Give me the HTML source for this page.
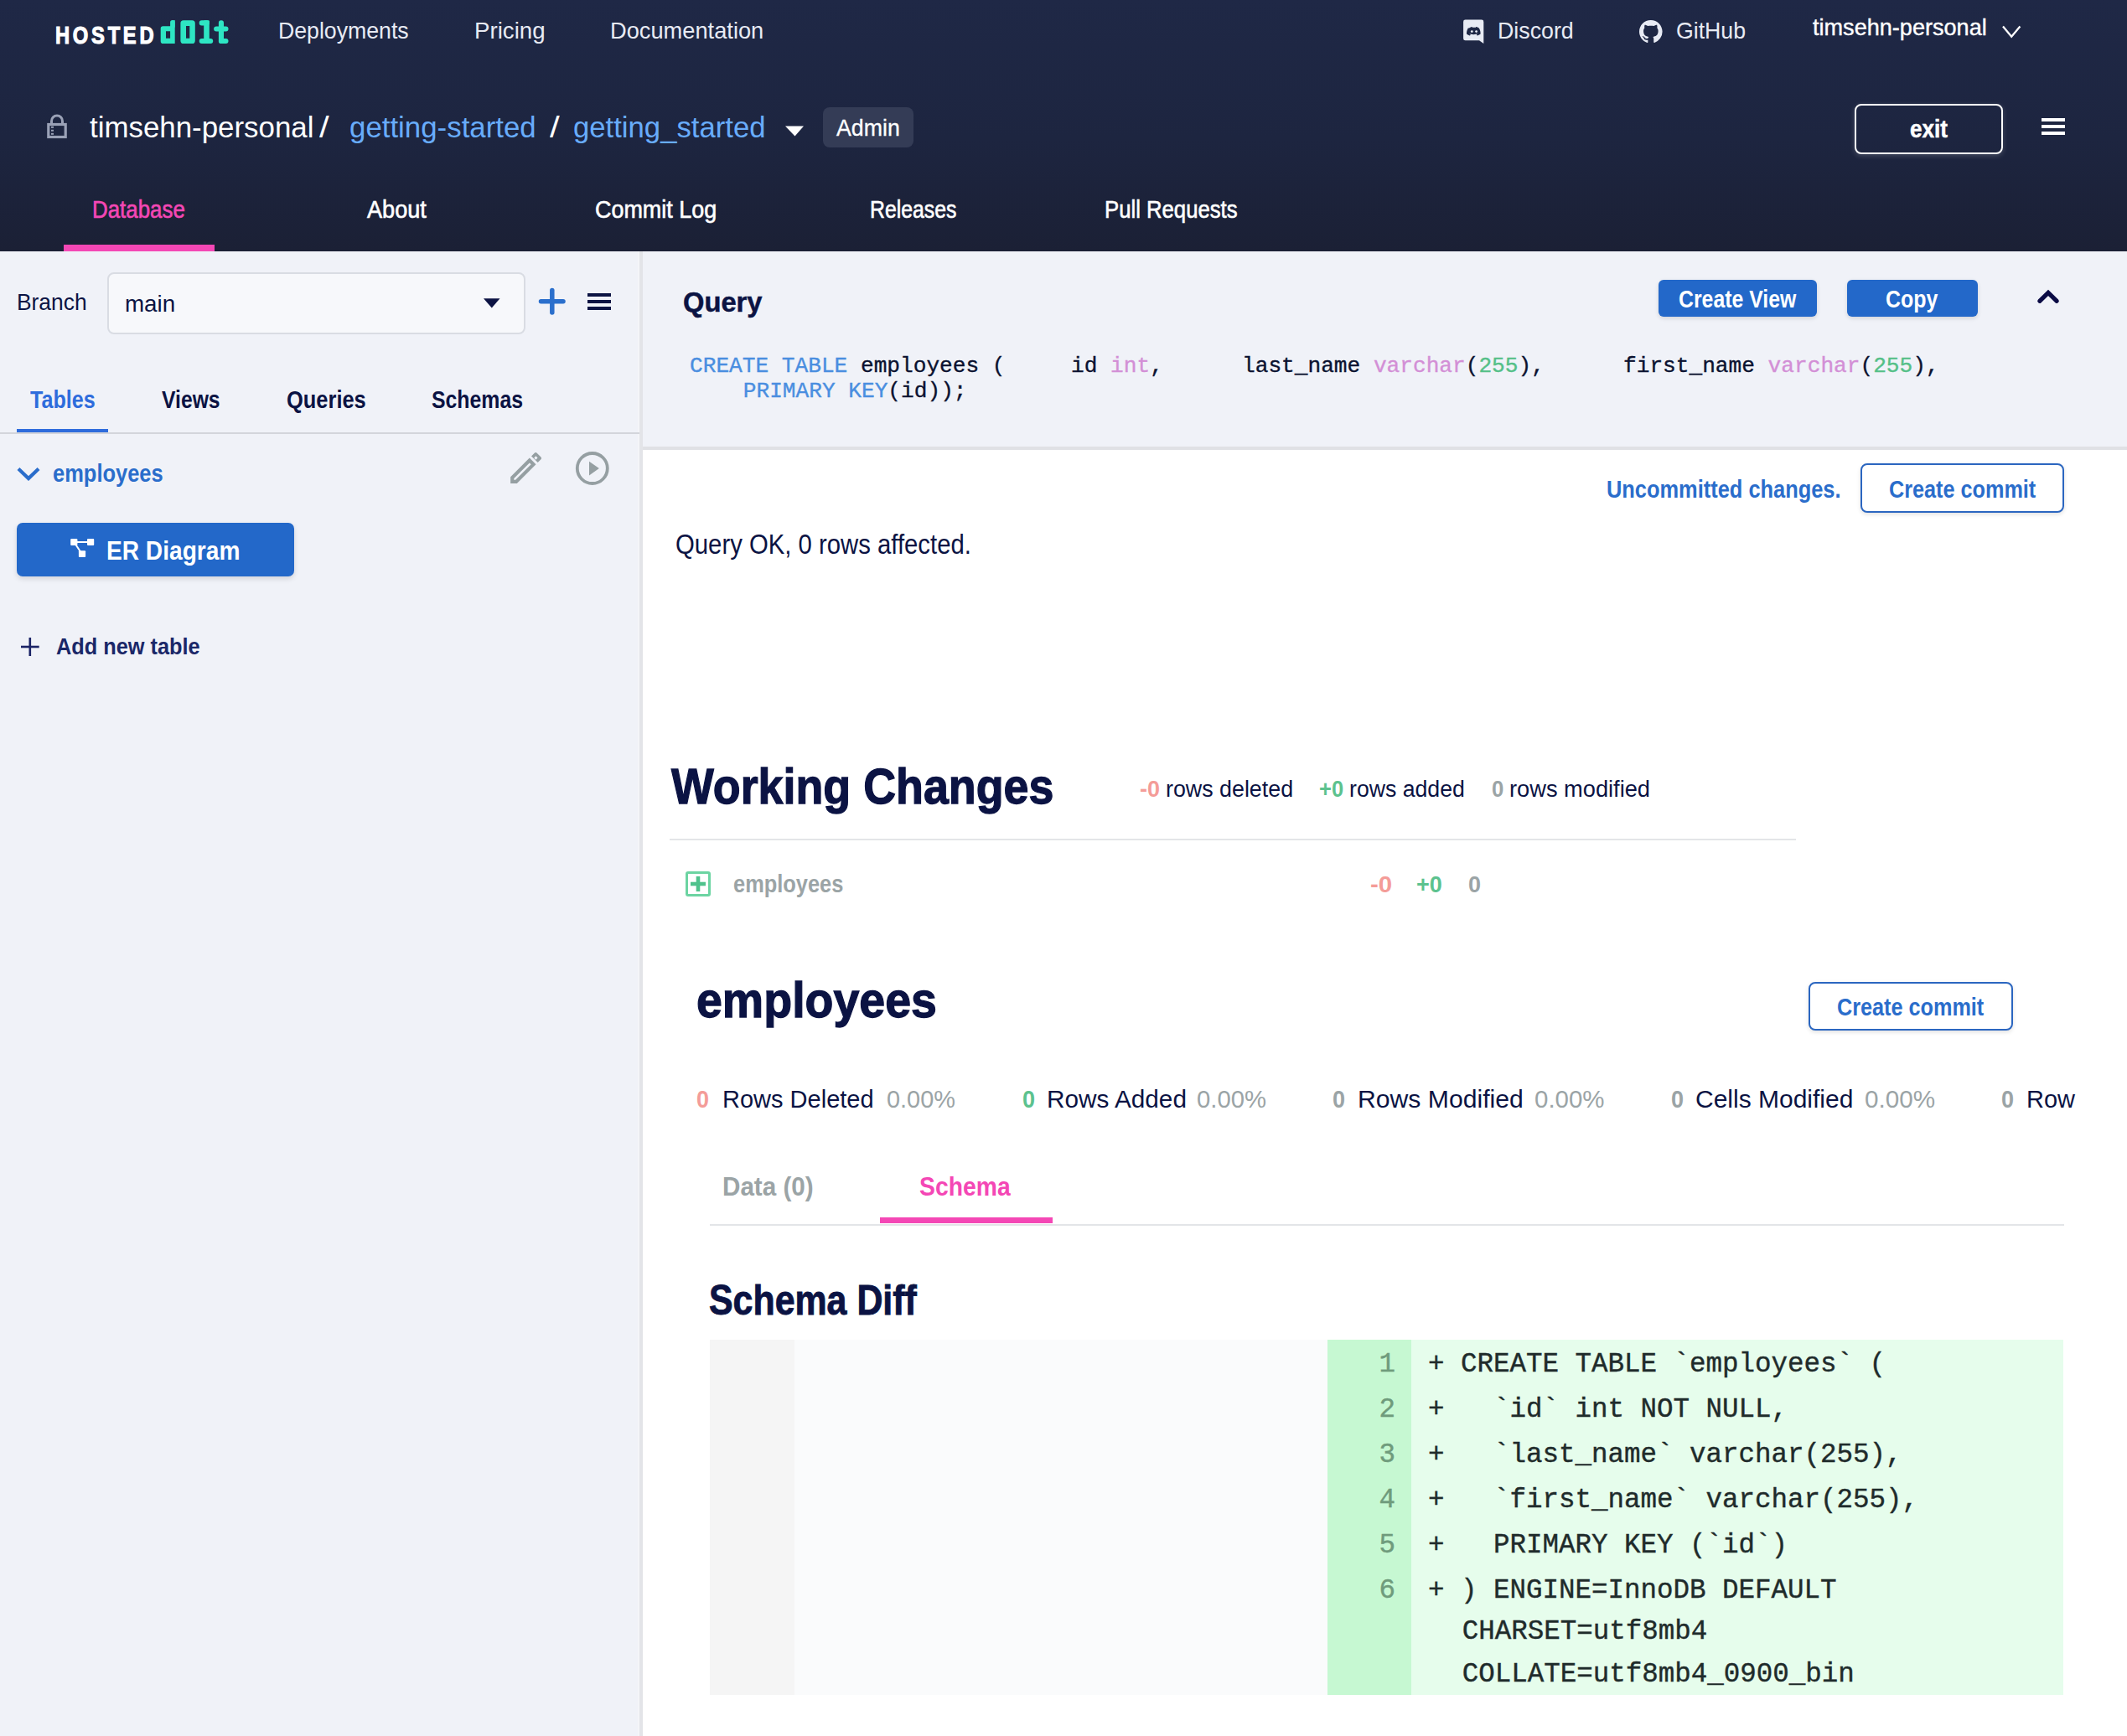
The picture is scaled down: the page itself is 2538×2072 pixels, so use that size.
<!DOCTYPE html>
<html><head><meta charset="utf-8">
<style>
html,body{margin:0;padding:0;}
body{width:2538px;height:2072px;position:relative;overflow:hidden;background:#ffffff;font-family:"Liberation Sans",sans-serif;}
.t{position:absolute;white-space:pre;line-height:1;transform-origin:0 0;}
.a{position:absolute;box-sizing:border-box;}
svg{position:absolute;overflow:visible;}
.m{position:absolute;white-space:pre;font-family:"Liberation Mono",monospace;line-height:1;}
</style></head><body>
<!-- header -->
<div class="a" style="left:0;top:0;width:2538px;height:300px;background:linear-gradient(180deg,#1f2846 0%,#1d2540 55%,#1b2035 100%);"></div>
<div class="a" style="left:76px;top:292px;width:180px;height:8px;background:#f447b5;"></div>
<!-- logo d0lt -->
<svg style="left:0;top:0" width="300" height="70" viewBox="0 0 300 70">
 <g fill="#2ee5c3">
  <path fill-rule="evenodd" d="M194.5 31.2h11.4v-4.4a2.8 2.8 0 0 1 2.8-2.8v0V52h-14.2a2.8 2.8 0 0 1-2.8-2.8V34a2.8 2.8 0 0 1 2.8-2.8zM198 37.2v8.5h5.1v-8.5z"/>
  <rect x="203.1" y="24" width="5.6" height="10" rx="2.8"/>
  <path fill-rule="evenodd" d="M219 24.3h10.2a3.6 3.6 0 0 1 3.6 3.6v20.5a3.6 3.6 0 0 1-3.6 3.6H219a3.6 3.6 0 0 1-3.6-3.6V27.9a3.6 3.6 0 0 1 3.6-3.6zM222 31v14.7h4.3V31z"/>
  <rect x="237.7" y="24.3" width="12.1" height="6.2" rx="3"/>
  <rect x="243.2" y="24.3" width="6.6" height="27.7" rx="1"/>
  <rect x="237.7" y="45.9" width="16.5" height="6.1" rx="3"/>
  <rect x="260.9" y="24.3" width="6.1" height="27.7" rx="3"/>
  <rect x="255.1" y="31.4" width="17.4" height="6.2" rx="3"/>
  <rect x="260.9" y="45.9" width="11.6" height="6.1" rx="3"/>
 </g>
</svg>
<!-- discord icon -->
<svg style="left:1746px;top:23px" width="26" height="30" viewBox="0 0 26 30">
 <path d="M2.5 0.6h19.4a2.4 2.4 0 0 1 2.4 2.4V29L19 25.3H2.5A2.4 2.4 0 0 1 0.1 22.9V3A2.4 2.4 0 0 1 2.5 0.6z" fill="#e8ebf4"/>
 <path d="M7 10.5c1.8-1.2 3.5-1.4 3.5-1.4l0.4 0.7c1.4-0.2 2.6-0.2 4 0l0.4-0.7s1.7 0.2 3.5 1.4c1.4 2.3 1.9 4.6 1.8 6.9-1.4 1.1-2.8 1.7-4 2l-0.8-1.3c0.7-0.3 1.3-0.6 1.8-1-3.2 1.5-7.5 1.5-10.6 0 0.5 0.4 1.1 0.7 1.8 1l-0.8 1.3c-1.2-0.3-2.6-0.9-4-2-0.1-2.3 0.4-4.6 1.8-6.9z" fill="#1e2745"/>
 <circle cx="10.3" cy="14.6" r="1.4" fill="#e8ebf4"/><circle cx="15.6" cy="14.6" r="1.4" fill="#e8ebf4"/>
</svg>
<!-- github icon -->
<svg style="left:1956.2px;top:23.8px" width="27.6" height="27.6" viewBox="0 0 16 16">
 <path fill="#e8ebf4" d="M8 0C3.58 0 0 3.58 0 8c0 3.54 2.29 6.53 5.47 7.59.4.07.55-.17.55-.38 0-.19-.01-.82-.01-1.49-2.01.37-2.53-.49-2.69-.94-.09-.23-.48-.94-.82-1.13-.28-.15-.68-.52-.01-.53.63-.01 1.08.58 1.23.82.72 1.21 1.87.87 2.33.66.07-.52.28-.87.51-1.07-1.78-.2-3.64-.89-3.64-3.95 0-.87.31-1.59.82-2.15-.08-.2-.36-1.02.08-2.12 0 0 .67-.21 2.2.82.64-.18 1.32-.27 2-.27.68 0 1.36.09 2 .27 1.53-1.04 2.2-.82 2.2-.82.44 1.1.16 1.92.08 2.12.51.56.82 1.27.82 2.15 0 3.07-1.87 3.75-3.65 3.95.29.25.54.73.54 1.48 0 1.07-.01 1.93-.01 2.2 0 .21.15.46.55.38A8.013 8.013 0 0016 8c0-4.42-3.58-8-8-8z"/>
</svg>
<!-- user chevron -->
<svg style="left:0;top:0" width="2538" height="300" viewBox="0 0 2538 300">
 <polyline points="2390,31.5 2400.2,43.8 2410.4,31.5" fill="none" stroke="#ffffff" stroke-width="2.3"/>
 <!-- lock -->
 <g fill="none" stroke="#9aa1b6">
  <path d="M61.5 147.5v-3a6.5 6.5 0 0 1 13 0v3" stroke-width="3"/>
  <rect x="57.8" y="148.5" width="20.4" height="15" stroke-width="3.2"/>
 </g>
 <g fill="#9aa1b6"><rect x="61" y="150.8" width="3" height="2"/><rect x="61" y="154.8" width="3" height="2"/><rect x="61" y="158.8" width="3" height="2"/></g>
 <!-- breadcrumb triangle -->
 <path d="M937 150.5h22l-10.5 12z" fill="#ffffff"/>
 <!-- hamburger -->
 <g fill="#ffffff"><rect x="2436" y="141" width="28" height="4"/><rect x="2436" y="149" width="28" height="4"/><rect x="2436" y="157" width="28" height="4"/></g>
</svg>
<div class="a" style="left:982px;top:128px;width:108px;height:48px;border-radius:8px;background:#343c56;"></div>
<div class="a" style="left:2213px;top:124px;width:177px;height:60px;border-radius:8px;border:2.5px solid #ffffff;box-shadow:0 2px 6px rgba(255,255,255,0.18);"></div>

<!-- sidebar -->
<div class="a" style="left:0;top:300px;width:765px;height:1772px;background:#f0f2f8;"></div>
<div class="a" style="left:760.7px;top:300px;width:2.5px;height:1772px;background:#f4f5f8;"></div><div class="a" style="left:763.2px;top:300px;width:3.6px;height:1772px;background:#e3e4e8;"></div>
<div class="a" style="left:128px;top:325px;width:499px;height:74px;border-radius:8px;border:2px solid #d9dce3;background:#f7f8fb;"></div>
<div class="a" style="left:0;top:516px;width:763px;height:2px;background:#d3d5db;"></div>
<div class="a" style="left:20px;top:511.8px;width:109px;height:4.2px;background:#2e6cdc;"></div>
<div class="a" style="left:20px;top:624px;width:331px;height:64px;border-radius:7px;background:#2368c9;box-shadow:0 3px 6px rgba(0,0,0,0.12);"></div>
<svg style="left:0;top:300px" width="765" height="600" viewBox="0 300 765 600">
 <path d="M577 356.2h19.5l-9.7 11.4z" fill="#0c1343"/>
 <g stroke="#2b6fcc" stroke-width="5.5" stroke-linecap="round"><line x1="658.8" y1="346.5" x2="658.8" y2="373"/><line x1="645.5" y1="359.8" x2="672" y2="359.8"/></g>
 <g fill="#0c1343"><rect x="701" y="350" width="28" height="4"/><rect x="701" y="358" width="28" height="4"/><rect x="701" y="366" width="28" height="4"/></g>
 <polyline points="23.5,561 34,571 44.5,561" fill="none" stroke="#2a6dcb" stroke-width="4.2" stroke-linecap="square"/>
 <!-- pencil -->
 <g transform="translate(603,533.9) scale(2.05)" fill="#959fa2" fill-rule="evenodd">
  <path d="M3 17.25L14.06 6.19l3.75 3.75L6.75 21H3zM5 19h.92l9.06-9.06-.92-.92L5 18.08z"/>
  <path d="M15.13 5.12l1.83-1.83c.39-.39 1.02-.39 1.41 0l2.34 2.34c.39.39.39 1.02 0 1.41l-1.83 1.83zM17.75 5.1l-1.05 1.05 1.05 1.05 1.05-1.05z"/>
 </g>
 <circle cx="706.8" cy="559" r="18" fill="none" stroke="#959fa2" stroke-width="3.8"/>
 <path d="M703 550.7v16.8l11.9-8.4z" fill="#959fa2"/>
 <!-- ER icon -->
 <g fill="#ffffff"><rect x="84.2" y="643" width="8.2" height="8" rx="1"/><rect x="104" y="643" width="8.2" height="8" rx="1"/><rect x="93.9" y="657.2" width="8.2" height="7.8" rx="1"/></g>
 <g stroke="#ffffff" stroke-width="2"><line x1="90" y1="647" x2="106" y2="647"/><line x1="89" y1="648" x2="97" y2="660"/></g>
 <!-- add plus -->
 <g stroke="#1b2366" stroke-width="2.6"><line x1="35.8" y1="761" x2="35.8" y2="783"/><line x1="25" y1="772" x2="46.7" y2="772"/></g>
</svg>

<!-- query panel -->
<div class="a" style="left:767px;top:300px;width:1771px;height:234px;background:#f0f2f8;"></div>
<div class="a" style="left:767px;top:533px;width:1771px;height:4px;background:#e0e1e5;"></div>
<div class="a" style="left:1979px;top:334px;width:189px;height:44px;border-radius:6px;background:#2368c9;box-shadow:0 2px 5px rgba(0,0,0,0.13);"></div>
<div class="a" style="left:2204px;top:334px;width:156px;height:44px;border-radius:6px;background:#2368c9;box-shadow:0 2px 5px rgba(0,0,0,0.13);"></div>
<svg style="left:2400px;top:320px" width="80" height="60" viewBox="2400 320 80 60">
 <polyline points="2433.8,359.3 2444,349.3 2454.2,359.3" fill="none" stroke="#0b0b45" stroke-width="5.2" stroke-linecap="round" stroke-linejoin="miter"/>
</svg>

<div class="a" style="left:2220px;top:553px;width:243px;height:59px;border-radius:8px;border:2.5px solid #2b66c0;background:#fff;box-shadow:0 2px 5px rgba(0,0,0,0.12);"></div>

<!-- working changes -->
<div class="a" style="left:799px;top:1000.7px;width:1344px;height:2px;background:#e3e5e8;"></div>
<div class="a" style="left:817.7px;top:1039.7px;width:30.6px;height:30.6px;border-radius:3px;border:3px solid #6cd4a2;"></div>
<svg style="left:817px;top:1039px" width="32" height="32" viewBox="0 0 32 32"><g stroke="#4fc28c" stroke-width="4.6"><line x1="16" y1="7" x2="16" y2="25"/><line x1="7" y1="16" x2="25" y2="16"/></g></svg>

<!-- employees -->
<div class="a" style="left:2158px;top:1171.6px;width:244px;height:58.2px;border-radius:8px;border:2.5px solid #2b66c0;background:#fff;box-shadow:0 2px 5px rgba(0,0,0,0.12);"></div>
<div class="a" style="left:846.5px;top:1461px;width:1616px;height:2px;background:#e3e5e8;"></div>
<div class="a" style="left:1050px;top:1453px;width:206px;height:7px;background:#f447b5;"></div>

<!-- diff -->
<div class="a" style="left:847px;top:1598.7px;width:100.6px;height:424px;background:#f5f5f5;"></div>
<div class="a" style="left:947.6px;top:1598.7px;width:636.5px;height:424px;background:#fafbfc;"></div>
<div class="a" style="left:1584.1px;top:1598.7px;width:100.1px;height:424px;background:#c6f8d2;"></div>
<div class="a" style="left:1684.2px;top:1598.7px;width:778.3px;height:424px;background:#e6fdec;"></div>
<!--DIFF-->
<span class='t' style='left:331.7px;top:23.2px;font-family:"Liberation Sans";font-weight:400;font-size:28px;color:#e8ebf4;letter-spacing:0px;-webkit-text-stroke-width:0px;transform:scaleX(0.9528)'>Deployments</span>
<span class='t' style='left:566.0px;top:23.2px;font-family:"Liberation Sans";font-weight:400;font-size:28px;color:#e8ebf4;letter-spacing:0px;-webkit-text-stroke-width:0px;transform:scaleX(0.9878)'>Pricing</span>
<span class='t' style='left:728.1px;top:23.2px;font-family:"Liberation Sans";font-weight:400;font-size:28px;color:#e8ebf4;letter-spacing:0px;-webkit-text-stroke-width:0px;transform:scaleX(0.9730)'>Documentation</span>
<span class='t' style='left:1787.1px;top:23.2px;font-family:"Liberation Sans";font-weight:400;font-size:28px;color:#e8ebf4;letter-spacing:0px;-webkit-text-stroke-width:0px;transform:scaleX(0.9560)'>Discord</span>
<span class='t' style='left:2000.0px;top:23.2px;font-family:"Liberation Sans";font-weight:400;font-size:28px;color:#e8ebf4;letter-spacing:0px;-webkit-text-stroke-width:0px;transform:scaleX(0.9529)'>GitHub</span>
<span class='t' style='left:2163.0px;top:18.5px;font-family:"Liberation Sans";font-weight:400;font-size:28px;color:#ffffff;letter-spacing:0px;-webkit-text-stroke-width:0.4px;transform:scaleX(0.9671)'>timsehn-personal</span>
<span class='t' style='left:107.0px;top:134.0px;font-family:"Liberation Sans";font-weight:400;font-size:35px;color:#ffffff;letter-spacing:0px;-webkit-text-stroke-width:0px;transform:scaleX(0.9962)'>timsehn-personal</span>
<span class='t' style='left:381.0px;top:134.0px;font-family:"Liberation Sans";font-weight:400;font-size:35px;color:#ffffff;letter-spacing:0px;-webkit-text-stroke-width:0px;transform:scaleX(1.2000)'>/</span>
<span class='t' style='left:417.0px;top:134.0px;font-family:"Liberation Sans";font-weight:400;font-size:35px;color:#68acfb;letter-spacing:0px;-webkit-text-stroke-width:0px;transform:scaleX(0.9955)'>getting-started</span>
<span class='t' style='left:656.0px;top:134.0px;font-family:"Liberation Sans";font-weight:400;font-size:35px;color:#ffffff;letter-spacing:0px;-webkit-text-stroke-width:0px;transform:scaleX(1.2000)'>/</span>
<span class='t' style='left:684.0px;top:134.0px;font-family:"Liberation Sans";font-weight:400;font-size:35px;color:#68acfb;letter-spacing:0px;-webkit-text-stroke-width:0px;transform:scaleX(0.9912)'>getting_started</span>
<span class='t' style='left:997.7px;top:138.9px;font-family:"Liberation Sans";font-weight:400;font-size:27.6px;color:#ffffff;letter-spacing:0px;-webkit-text-stroke-width:0.3px;transform:scaleX(0.9688)'>Admin</span>
<span class='t' style='left:2278.7px;top:139.0px;font-family:"Liberation Sans";font-weight:700;font-size:30px;color:#ffffff;letter-spacing:0px;-webkit-text-stroke-width:0.5px;transform:scaleX(0.8706)'>exit</span>
<span class='t' style='left:110.2px;top:236.0px;font-family:"Liberation Sans";font-weight:400;font-size:29px;color:#f447b5;letter-spacing:0px;-webkit-text-stroke-width:0.6px;transform:scaleX(0.8926)'>Database</span>
<span class='t' style='left:438.0px;top:236.0px;font-family:"Liberation Sans";font-weight:400;font-size:29px;color:#ffffff;letter-spacing:0px;-webkit-text-stroke-width:0.6px;transform:scaleX(0.9342)'>About</span>
<span class='t' style='left:710.1px;top:236.0px;font-family:"Liberation Sans";font-weight:400;font-size:29px;color:#ffffff;letter-spacing:0px;-webkit-text-stroke-width:0.6px;transform:scaleX(0.9286)'>Commit Log</span>
<span class='t' style='left:1037.9px;top:236.0px;font-family:"Liberation Sans";font-weight:400;font-size:29px;color:#ffffff;letter-spacing:0px;-webkit-text-stroke-width:0.6px;transform:scaleX(0.8551)'>Releases</span>
<span class='t' style='left:1318.2px;top:236.0px;font-family:"Liberation Sans";font-weight:400;font-size:29px;color:#ffffff;letter-spacing:0px;-webkit-text-stroke-width:0.6px;transform:scaleX(0.8864)'>Pull Requests</span>
<span class='t' style='left:19.9px;top:347.0px;font-family:"Liberation Sans";font-weight:400;font-size:27.5px;color:#0b1343;letter-spacing:0px;-webkit-text-stroke-width:0px;transform:scaleX(0.9590)'>Branch</span>
<span class='t' style='left:148.5px;top:348.8px;font-family:"Liberation Sans";font-weight:400;font-size:28px;color:#0b1343;letter-spacing:0px;-webkit-text-stroke-width:0px;transform:scaleX(0.9912)'>main</span>
<span class='t' style='left:36.0px;top:463.0px;font-family:"Liberation Sans";font-weight:700;font-size:29px;color:#2e6cdc;letter-spacing:0px;-webkit-text-stroke-width:0px;transform:scaleX(0.8652)'>Tables</span>
<span class='t' style='left:193.0px;top:463.0px;font-family:"Liberation Sans";font-weight:700;font-size:29px;color:#0b1343;letter-spacing:0px;-webkit-text-stroke-width:0px;transform:scaleX(0.8519)'>Views</span>
<span class='t' style='left:342.1px;top:463.0px;font-family:"Liberation Sans";font-weight:700;font-size:29px;color:#0b1343;letter-spacing:0px;-webkit-text-stroke-width:0px;transform:scaleX(0.8774)'>Queries</span>
<span class='t' style='left:515.1px;top:463.0px;font-family:"Liberation Sans";font-weight:700;font-size:29px;color:#0b1343;letter-spacing:0px;-webkit-text-stroke-width:0px;transform:scaleX(0.8560)'>Schemas</span>
<span class='t' style='left:63.1px;top:551.0px;font-family:"Liberation Sans";font-weight:700;font-size:29px;color:#2a6dcb;letter-spacing:0px;-webkit-text-stroke-width:0px;transform:scaleX(0.8784)'>employees</span>
<span class='t' style='left:127.2px;top:642.0px;font-family:"Liberation Sans";font-weight:700;font-size:31px;color:#ffffff;letter-spacing:0px;-webkit-text-stroke-width:0px;transform:scaleX(0.9070)'>ER Diagram</span>
<span class='t' style='left:67.1px;top:758.0px;font-family:"Liberation Sans";font-weight:700;font-size:28px;color:#1a2768;letter-spacing:0px;-webkit-text-stroke-width:0px;transform:scaleX(0.9043)'>Add new table</span>
<span class='t' style='left:814.5px;top:344.0px;font-family:"Liberation Sans";font-weight:700;font-size:33px;color:#0b1343;letter-spacing:0px;-webkit-text-stroke-width:0.5px;transform:scaleX(0.9904)'>Query</span>
<span class='t' style='left:2003.1px;top:343.0px;font-family:"Liberation Sans";font-weight:700;font-size:29px;color:#ffffff;letter-spacing:0px;-webkit-text-stroke-width:0px;transform:scaleX(0.8558)'>Create View</span>
<span class='t' style='left:2250.1px;top:343.0px;font-family:"Liberation Sans";font-weight:700;font-size:29px;color:#ffffff;letter-spacing:0px;-webkit-text-stroke-width:0px;transform:scaleX(0.8592)'>Copy</span>
<span class='t' style='left:806.2px;top:633.0px;font-family:"Liberation Sans";font-weight:400;font-size:33px;color:#0b1343;letter-spacing:0px;-webkit-text-stroke-width:0px;transform:scaleX(0.8880)'>Query OK, 0 rows affected.</span>
<span class='t' style='left:1917.2px;top:570.0px;font-family:"Liberation Sans";font-weight:700;font-size:29px;color:#2a6dcb;letter-spacing:0px;-webkit-text-stroke-width:0px;transform:scaleX(0.8762)'>Uncommitted changes.</span>
<span class='t' style='left:2254.1px;top:570.0px;font-family:"Liberation Sans";font-weight:700;font-size:29px;color:#2a6dcb;letter-spacing:0px;-webkit-text-stroke-width:0px;transform:scaleX(0.8700)'>Create commit</span>
<span class='t' style='left:800.8px;top:908.6px;font-family:"Liberation Sans";font-weight:700;font-size:60px;color:#0b1343;letter-spacing:0px;-webkit-text-stroke-width:1.3px;transform:scaleX(0.8967)'>Working Changes</span>
<span class='t' style='left:1360.0px;top:929.0px;font-family:"Liberation Sans";font-weight:700;font-size:27px;color:#f49c98;letter-spacing:0px;-webkit-text-stroke-width:0px;transform:scaleX(1.0000)'>-0</span>
<span class='t' style='left:1391.0px;top:929.0px;font-family:"Liberation Sans";font-weight:400;font-size:27px;color:#0b1343;letter-spacing:0px;-webkit-text-stroke-width:0px;transform:scaleX(0.9933)'>rows deleted</span>
<span class='t' style='left:1574.1px;top:929.0px;font-family:"Liberation Sans";font-weight:700;font-size:27px;color:#5cc28e;letter-spacing:0px;-webkit-text-stroke-width:0px;transform:scaleX(0.9448)'>+0</span>
<span class='t' style='left:1610.0px;top:929.0px;font-family:"Liberation Sans";font-weight:400;font-size:27px;color:#0b1343;letter-spacing:0px;-webkit-text-stroke-width:0px;transform:scaleX(0.9875)'>rows added</span>
<span class='t' style='left:1780.0px;top:929.0px;font-family:"Liberation Sans";font-weight:700;font-size:27px;color:#9ba4a6;letter-spacing:0px;-webkit-text-stroke-width:0px;transform:scaleX(0.9538)'>0</span>
<span class='t' style='left:1801.2px;top:929.0px;font-family:"Liberation Sans";font-weight:400;font-size:27px;color:#0b1343;letter-spacing:0px;-webkit-text-stroke-width:0px;transform:scaleX(1.0086)'>rows modified</span>
<span class='t' style='left:874.9px;top:1040.1px;font-family:"Liberation Sans";font-weight:700;font-size:29.5px;color:#9ba4a6;letter-spacing:0px;-webkit-text-stroke-width:0px;transform:scaleX(0.8613)'>employees</span>
<span class='t' style='left:1634.9px;top:1043.0px;font-family:"Liberation Sans";font-weight:700;font-size:27px;color:#f49c98;letter-spacing:0px;-webkit-text-stroke-width:0px;transform:scaleX(1.0909)'>-0</span>
<span class='t' style='left:1690.0px;top:1043.0px;font-family:"Liberation Sans";font-weight:700;font-size:27px;color:#5cc28e;letter-spacing:0px;-webkit-text-stroke-width:0px;transform:scaleX(1.0000)'>+0</span>
<span class='t' style='left:1752.0px;top:1043.0px;font-family:"Liberation Sans";font-weight:700;font-size:27px;color:#9ba4a6;letter-spacing:0px;-webkit-text-stroke-width:0px;transform:scaleX(1.0000)'>0</span>
<span class='t' style='left:831.0px;top:1164.3px;font-family:"Liberation Sans";font-weight:700;font-size:60px;color:#0b1343;letter-spacing:0px;-webkit-text-stroke-width:1.3px;transform:scaleX(0.9252)'>employees</span>
<span class='t' style='left:2192.1px;top:1188.0px;font-family:"Liberation Sans";font-weight:700;font-size:29px;color:#2a6dcb;letter-spacing:0px;-webkit-text-stroke-width:0px;transform:scaleX(0.8700)'>Create commit</span>
<span class='t' style='left:831.1px;top:1296.5px;font-family:"Liberation Sans";font-weight:700;font-size:30px;color:#f49c98;letter-spacing:0px;-webkit-text-stroke-width:0px;transform:scaleX(0.9000)'>0</span>
<span class='t' style='left:862.1px;top:1296.5px;font-family:"Liberation Sans";font-weight:400;font-size:30px;color:#0b1343;letter-spacing:0px;-webkit-text-stroke-width:0px;transform:scaleX(0.9672)'>Rows Deleted</span>
<span class='t' style='left:1057.6px;top:1296.5px;font-family:"Liberation Sans";font-weight:400;font-size:30px;color:#9ba4a6;letter-spacing:0px;-webkit-text-stroke-width:0px;transform:scaleX(0.9627)'>0.00%</span>
<span class='t' style='left:1219.6px;top:1296.5px;font-family:"Liberation Sans";font-weight:700;font-size:30px;color:#5cc28e;letter-spacing:0px;-webkit-text-stroke-width:0px;transform:scaleX(0.9000)'>0</span>
<span class='t' style='left:1248.5px;top:1296.5px;font-family:"Liberation Sans";font-weight:400;font-size:30px;color:#0b1343;letter-spacing:0px;-webkit-text-stroke-width:0px;transform:scaleX(0.9909)'>Rows Added</span>
<span class='t' style='left:1428.0px;top:1296.5px;font-family:"Liberation Sans";font-weight:400;font-size:30px;color:#9ba4a6;letter-spacing:0px;-webkit-text-stroke-width:0px;transform:scaleX(0.9759)'>0.00%</span>
<span class='t' style='left:1590.1px;top:1296.5px;font-family:"Liberation Sans";font-weight:700;font-size:30px;color:#9ba4a6;letter-spacing:0px;-webkit-text-stroke-width:0px;transform:scaleX(0.9000)'>0</span>
<span class='t' style='left:1620.0px;top:1296.5px;font-family:"Liberation Sans";font-weight:400;font-size:30px;color:#0b1343;letter-spacing:0px;-webkit-text-stroke-width:0px;transform:scaleX(1.0052)'>Rows Modified</span>
<span class='t' style='left:1830.5px;top:1296.5px;font-family:"Liberation Sans";font-weight:400;font-size:30px;color:#9ba4a6;letter-spacing:0px;-webkit-text-stroke-width:0px;transform:scaleX(0.9819)'>0.00%</span>
<span class='t' style='left:1993.6px;top:1296.5px;font-family:"Liberation Sans";font-weight:700;font-size:30px;color:#9ba4a6;letter-spacing:0px;-webkit-text-stroke-width:0px;transform:scaleX(0.9000)'>0</span>
<span class='t' style='left:2023.0px;top:1296.5px;font-family:"Liberation Sans";font-weight:400;font-size:30px;color:#0b1343;letter-spacing:0px;-webkit-text-stroke-width:0px;transform:scaleX(1.0000)'>Cells Modified</span>
<span class='t' style='left:2225.0px;top:1296.5px;font-family:"Liberation Sans";font-weight:400;font-size:30px;color:#9ba4a6;letter-spacing:0px;-webkit-text-stroke-width:0px;transform:scaleX(0.9880)'>0.00%</span>
<span class='t' style='left:2387.6px;top:1296.5px;font-family:"Liberation Sans";font-weight:700;font-size:30px;color:#9ba4a6;letter-spacing:0px;-webkit-text-stroke-width:0px;transform:scaleX(0.9000)'>0</span>
<span class='t' style='left:2418.1px;top:1296.5px;font-family:"Liberation Sans";font-weight:400;font-size:30px;color:#0b1343;letter-spacing:0px;-webkit-text-stroke-width:0px;transform:scaleX(0.9655)'>Row</span>
<span class='t' style='left:862.1px;top:1400.0px;font-family:"Liberation Sans";font-weight:700;font-size:32px;color:#9ba4a6;letter-spacing:0px;-webkit-text-stroke-width:0px;transform:scaleX(0.9254)'>Data (0)</span>
<span class='t' style='left:1097.1px;top:1400.0px;font-family:"Liberation Sans";font-weight:700;font-size:32px;color:#f447b5;letter-spacing:0px;-webkit-text-stroke-width:0px;transform:scaleX(0.8852)'>Schema</span>
<span class='t' style='left:846.1px;top:1527.0px;font-family:"Liberation Sans";font-weight:700;font-size:50px;color:#0b1343;letter-spacing:0px;-webkit-text-stroke-width:0.9px;transform:scaleX(0.8576)'>Schema Diff</span>
<span class='t' style='left:65.9px;top:27.9px;font-family:"Liberation Sans";font-weight:700;font-size:28.6px;color:#ffffff;letter-spacing:4.5px;-webkit-text-stroke-width:1.1px;transform:scaleX(0.8300)'>HOSTED</span>
<span class='t' style='left:822.7px;top:423.5px;font-family:"Liberation Mono";font-weight:400;font-size:26px;color:#0b1230;letter-spacing:0px;-webkit-text-stroke-width:0.35px;transform:scaleX(1.0056)'><span style="color:#4a8ee0">CREATE TABLE</span> employees (     id <span style="color:#d38fd6">int</span>,      last_name <span style="color:#d38fd6">varchar</span>(<span style="color:#55c088">255</span>),      first_name <span style="color:#d38fd6">varchar</span>(<span style="color:#55c088">255</span>),</span>
<span class='t' style='left:823.6px;top:454.2px;font-family:"Liberation Mono";font-weight:400;font-size:26px;color:#0b1230;letter-spacing:0px;-webkit-text-stroke-width:0.35px;transform:scaleX(1.0056)'>    <span style="color:#4a8ee0">PRIMARY KEY</span>(id));</span>
<span class='t' style='left:1704.0px;top:1613.2px;font-family:"Liberation Mono";font-weight:400;font-size:32.5px;color:#1f2b2b;letter-spacing:0px;-webkit-text-stroke-width:0.4px;transform:scaleX(1.0000)'>+ CREATE TABLE `employees` (</span>
<span class='t' style='left:1645.6px;top:1613.2px;font-family:"Liberation Mono";font-weight:400;font-size:32.5px;color:#6f9b7c;letter-spacing:0px;-webkit-text-stroke-width:0.4px;transform:scaleX(1.0000)'>1</span>
<span class='t' style='left:1704.0px;top:1667.1px;font-family:"Liberation Mono";font-weight:400;font-size:32.5px;color:#1f2b2b;letter-spacing:0px;-webkit-text-stroke-width:0.4px;transform:scaleX(1.0000)'>+   `id` int NOT NULL,</span>
<span class='t' style='left:1645.6px;top:1667.1px;font-family:"Liberation Mono";font-weight:400;font-size:32.5px;color:#6f9b7c;letter-spacing:0px;-webkit-text-stroke-width:0.4px;transform:scaleX(1.0000)'>2</span>
<span class='t' style='left:1704.0px;top:1721.0px;font-family:"Liberation Mono";font-weight:400;font-size:32.5px;color:#1f2b2b;letter-spacing:0px;-webkit-text-stroke-width:0.4px;transform:scaleX(1.0000)'>+   `last_name` varchar(255),</span>
<span class='t' style='left:1645.6px;top:1721.0px;font-family:"Liberation Mono";font-weight:400;font-size:32.5px;color:#6f9b7c;letter-spacing:0px;-webkit-text-stroke-width:0.4px;transform:scaleX(1.0000)'>3</span>
<span class='t' style='left:1704.0px;top:1774.9px;font-family:"Liberation Mono";font-weight:400;font-size:32.5px;color:#1f2b2b;letter-spacing:0px;-webkit-text-stroke-width:0.4px;transform:scaleX(1.0000)'>+   `first_name` varchar(255),</span>
<span class='t' style='left:1645.6px;top:1774.9px;font-family:"Liberation Mono";font-weight:400;font-size:32.5px;color:#6f9b7c;letter-spacing:0px;-webkit-text-stroke-width:0.4px;transform:scaleX(1.0000)'>4</span>
<span class='t' style='left:1704.0px;top:1828.8px;font-family:"Liberation Mono";font-weight:400;font-size:32.5px;color:#1f2b2b;letter-spacing:0px;-webkit-text-stroke-width:0.4px;transform:scaleX(1.0000)'>+   PRIMARY KEY (`id`)</span>
<span class='t' style='left:1645.6px;top:1828.8px;font-family:"Liberation Mono";font-weight:400;font-size:32.5px;color:#6f9b7c;letter-spacing:0px;-webkit-text-stroke-width:0.4px;transform:scaleX(1.0000)'>5</span>
<span class='t' style='left:1704.0px;top:1882.7px;font-family:"Liberation Mono";font-weight:400;font-size:32.5px;color:#1f2b2b;letter-spacing:0px;-webkit-text-stroke-width:0.4px;transform:scaleX(1.0000)'>+ ) ENGINE=InnoDB DEFAULT</span>
<span class='t' style='left:1645.6px;top:1882.7px;font-family:"Liberation Mono";font-weight:400;font-size:32.5px;color:#6f9b7c;letter-spacing:0px;-webkit-text-stroke-width:0.4px;transform:scaleX(1.0000)'>6</span>
<span class='t' style='left:1705.7px;top:1932.3px;font-family:"Liberation Mono";font-weight:400;font-size:32.5px;color:#1f2b2b;letter-spacing:0px;-webkit-text-stroke-width:0.4px;transform:scaleX(1.0000)'>  CHARSET=utf8mb4</span>
<span class='t' style='left:1705.7px;top:1982.8px;font-family:"Liberation Mono";font-weight:400;font-size:32.5px;color:#1f2b2b;letter-spacing:0px;-webkit-text-stroke-width:0.4px;transform:scaleX(1.0000)'>  COLLATE=utf8mb4_0900_bin</span>
</body></html>
